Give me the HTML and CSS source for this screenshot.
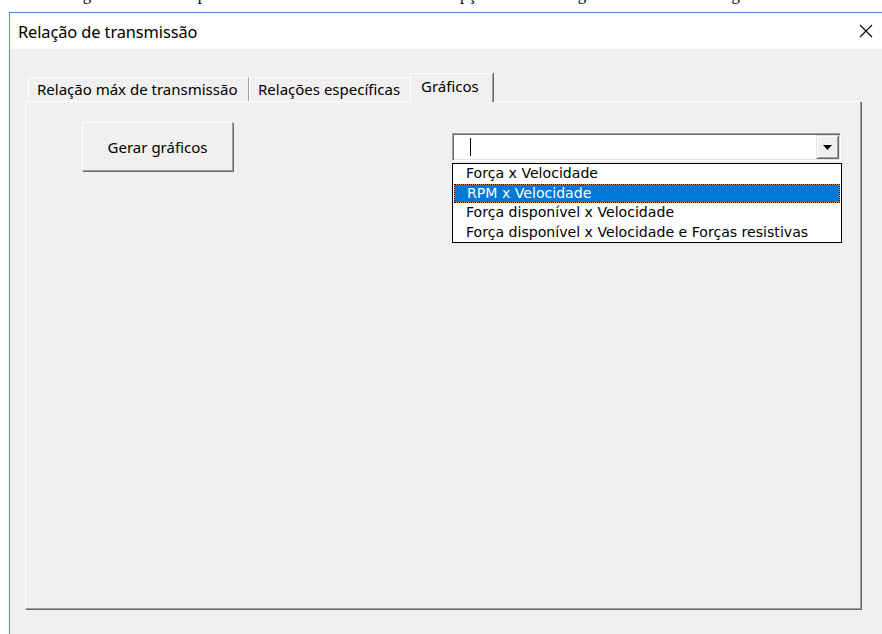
FILE: index.html
```html
<!DOCTYPE html>
<html lang="pt-BR">
<head>
<meta charset="utf-8">
<title>Relação de transmissão</title>
<link rel="stylesheet" href="styles.css">
</head>
<body>
  <div class="doc-line">
    <p>Na figura 12 abaixo é possível observar e selecionar a outra opção do menu de gráficos a serem então gerados.</p>
  </div>

  <div class="window">
    <div class="titlebar">
      <span class="title">Relação de transmissão</span>
      <svg class="close" width="14" height="14" viewBox="0 0 14 14" aria-label="Fechar">
        <path d="M1 1 L13 13 M13 1 L1 13" stroke="#000" stroke-width="1.1" fill="none"/>
      </svg>
    </div>

    <div class="client">
      <div class="tabs">
        <div class="tab tab-max">Relação máx de transmissão</div>
        <div class="tab tab-spec">Relações específicas</div>
        <div class="tab tab-active">Gráficos</div>
      </div>

      <div class="panel">
        <button class="btn" type="button">Gerar gráficos</button>

        <div class="combo-wrap">
          <div class="combo">
            <span class="caret"></span>
            <span class="drop">
              <svg width="9" height="5" viewBox="0 0 9 5"><path d="M0 0 H9 L4.5 5 Z" fill="#000"/></svg>
            </span>
          </div>
          <ul class="list">
            <li>Força x Velocidade</li>
            <li class="selected">RPM x Velocidade</li>
            <li>Força disponível x Velocidade</li>
            <li>Força disponível x Velocidade e Forças resistivas</li>
          </ul>
        </div>
      </div>
    </div>
  </div>
</body>
</html>
```

FILE: styles.css
```css
html, body {
  margin: 0;
  padding: 0;
}

body {
  width: 882px;
  height: 634px;
  overflow: hidden;
  background: #ffffff;
  font-family: "Noto Sans", sans-serif;
  color: #000;
}

/* last line of the surrounding document, only its descenders peek out above the dialog */
.doc-line {
  height: 12px;
  overflow: hidden;
  display: flex;
  align-items: flex-end;
  padding-left: 49px;
  font-family: "Liberation Serif", "Times New Roman", serif;
  font-size: 16.7px;
}

.doc-line p {
  margin: 0;
  line-height: 34px;
  white-space: nowrap;
}

/* dialog window */
.window {
  margin-left: 9px;
  width: 872px;
  height: 621px;
  border-left: 1px solid #4a92dd;
  border-top: 1px solid #4a92dd;
  display: flex;
  flex-direction: column;
}

.titlebar {
  height: 36px;
  flex: none;
  background: #ffffff;
  display: flex;
  align-items: center;
  justify-content: space-between;
  padding: 0 9px 0 8px;
}

.title {
  font-size: 16.4px;
  letter-spacing: -0.1px;
}

.close {
  display: block;
}

.client {
  flex: 1;
  background: #f0f0f0;
  padding: 24px 0 0 15px;
}

/* tab strip */
.tabs {
  display: flex;
  align-items: flex-end;
  height: 28px;
  padding-left: 3px;
}

.tab {
  box-sizing: border-box;
  height: 24px;
  border-top: 1px solid #ffffff;
  border-left: 1px solid #ffffff;
  border-right: 1px solid #a0a0a0;
  box-shadow: 1px 0 0 #696969;
  font-size: 15px;
  line-height: 23px;
  padding-left: 8px;
  white-space: nowrap;
  background: #f0f0f0;
}

.tab-max {
  width: 221px;
}

.tab-spec {
  width: 163px;
}

.tab-active {
  position: relative;
  z-index: 1;
  width: 83px;
  height: 29px;
  margin-left: -2px;
  margin-bottom: -1px;
  padding-left: 10px;
  padding-top: 1px;
}

/* tab page */
.panel {
  box-sizing: border-box;
  width: 836px;
  height: 508px;
  border-top: 1px solid #ffffff;
  border-left: 1px solid #ffffff;
  border-right: 1px solid #a0a0a0;
  border-bottom: 1px solid #a0a0a0;
  box-shadow: 1px 1px 0 #696969;
  display: flex;
  align-items: flex-start;
  padding: 20px 0 0 56px;
}

.btn {
  box-sizing: border-box;
  width: 151px;
  height: 49px;
  margin: 0;
  padding: 0;
  background: #f0f0f0;
  border-top: 1px solid #ffffff;
  border-left: 1px solid #ffffff;
  border-right: 1px solid #a0a0a0;
  border-bottom: 1px solid #a0a0a0;
  box-shadow: 1px 1px 0 #696969;
  font-family: "Noto Sans", sans-serif;
  font-size: 15px;
  color: #000;
}

.combo-wrap {
  margin: 11px 0 0 219px;
  width: 390px;
}

.combo {
  box-sizing: border-box;
  width: 389px;
  height: 28px;
  background: #ffffff;
  border: 1px solid;
  border-color: #a0a0a0 #ffffff #ffffff #a0a0a0;
  box-shadow: inset 1px 1px 0 #696969, inset -1px -1px 0 #e3e3e3;
  display: flex;
  align-items: center;
  justify-content: space-between;
  padding: 0 1px 0 17px;
}

.caret {
  width: 1px;
  height: 18px;
  background: #000;
}

.drop {
  box-sizing: border-box;
  width: 23px;
  height: 24px;
  background: #f0f0f0;
  border-top: 1px solid #e3e3e3;
  border-left: 1px solid #e3e3e3;
  border-right: 1px solid #696969;
  border-bottom: 1px solid #696969;
  box-shadow: inset 1px 1px 0 #ffffff, inset -1px -1px 0 #a0a0a0;
  display: flex;
  align-items: center;
  justify-content: center;
}

.drop svg {
  display: block;
}

/* open dropdown list */
.list {
  box-sizing: border-box;
  list-style: none;
  margin: 2px 0 0 0;
  padding: 0;
  width: 390px;
  height: 80px;
  background: #ffffff;
  border: 1px solid #000;
  font-family: "DejaVu Sans", sans-serif;
  font-size: 14.1px;
}

.list li {
  box-sizing: border-box;
  height: 19.5px;
  line-height: 19.5px;
  padding-left: 13px;
  white-space: nowrap;
}

.list li.selected {
  margin: 0 1px;
  padding-left: 12px;
  color: #ffffff;
  border: 1px dotted #000;
  line-height: 17.5px;
  background: linear-gradient(#0078d7, #0078d7) padding-box, linear-gradient(#ff8728, #ff8728) border-box;
}
```
